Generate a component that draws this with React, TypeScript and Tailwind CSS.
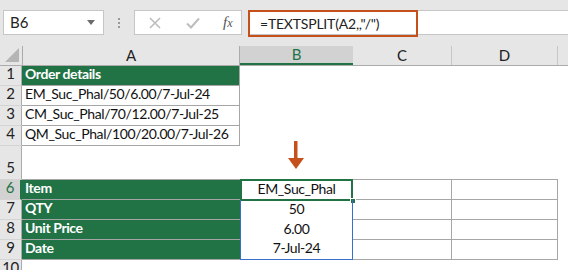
import React from "react";

const font = { fontFamily: "Lato, 'Liberation Sans', sans-serif" };

const gridLine = "border-[#a6a6a6]";

function RowHead({ n, active }: { n: number; active?: boolean }) {
  return (
    <div
      className={`w-[22px] shrink-0 flex items-end justify-center pb-[1px] text-[15px] border-b border-[#d4d4d4] ${
        active
          ? "bg-[#d2d2d2] text-[#217346] border-r-2 border-r-[#217346]"
          : "bg-[#e6e6e6] text-[#222] border-r border-r-[#ababab]"
      }`}
    >
      {n}
    </div>
  );
}

export default function App() {
  return (
    <div className="w-[568px] h-[270px] overflow-hidden bg-white" style={font}>
      {/* formula bar */}
      <div className="h-[46px] bg-[#e6e6e6] flex items-start pt-[10px] pl-[3px]">
        <div className="w-[101px] h-[25px] bg-white border border-[#c6c6c6] flex items-center px-[6px] text-[15px] text-[#222]">
          <span>B6</span>
          <span className="ml-auto mr-[2px] w-0 h-0 border-l-[4px] border-r-[4px] border-t-[5px] border-l-transparent border-r-transparent border-t-[#6b6b6b]" />
        </div>
        <div className="w-[30px] h-[25px] flex flex-col items-center justify-center gap-[2px]">
          <span className="w-[2px] h-[2px] bg-[#9a9a9a]" />
          <span className="w-[2px] h-[2px] bg-[#9a9a9a]" />
          <span className="w-[2px] h-[2px] bg-[#9a9a9a]" />
        </div>
        <div className="w-[108px] h-[25px] bg-white border border-[#c6c6c6] flex items-center">
          <svg width="12" height="12" viewBox="0 0 12 12" className="ml-[14px]">
            <path d="M1 1L11 11M11 1L1 11" stroke="#bdbdbd" strokeWidth="1.6" />
          </svg>
          <svg width="14" height="12" viewBox="0 0 14 12" className="ml-[25px]">
            <path d="M1 6.5L5 10.5L13 1.5" stroke="#bdbdbd" strokeWidth="2" fill="none" />
          </svg>
          <span
            className="ml-[23px] text-[15px] italic text-[#555]"
            style={{ fontFamily: "'Liberation Serif', serif" }}
          >
            f<span className="text-[12px]">x</span>
          </span>
        </div>
        <div className="ml-[6px] flex-1 h-[25px] bg-white border-y border-[#c6c6c6] flex">
          <div className="w-[170px] h-[27px] -mt-[1px] border-2 border-[#c5501b] flex items-center pl-[10px] text-[14px] tracking-[-0.2px] text-[#222] whitespace-nowrap">
            =TEXTSPLIT(A2,,"/")
          </div>
        </div>
      </div>

      {/* column headers */}
      <div className="flex h-[20px] bg-[#e6e6e6] border-b border-[#ababab] text-[15px] text-[#222]">
        <div className="w-[22px] shrink-0 relative">
          <svg width="14" height="14" viewBox="0 0 14 14" className="absolute right-[3px] bottom-[3px]">
            <path d="M14 0V14H0Z" fill="#b5b5b5" />
          </svg>
        </div>
        <div className="w-[218px] shrink-0 flex items-center justify-center border-l border-r border-[#ababab]">A</div>
        <div className="w-[113px] shrink-0 flex items-center justify-center bg-[#d2d2d2] text-[#217346] border-b-2 border-[#217346]">B</div>
        <div className="w-[99px] shrink-0 flex items-center justify-center border-r border-[#c6c6c6]">C</div>
        <div className="w-[106px] shrink-0 flex items-center justify-center border-r border-[#c6c6c6]">D</div>
        <div className="flex-1" />
      </div>

      {/* sheet */}
      <div className="text-[14px] tracking-[-0.4px] text-[#111] whitespace-nowrap">
        <div className="flex h-[20px]">
          <RowHead n={1} />
          <div className={`w-[218px] shrink-0 bg-[#217346] text-white font-bold flex items-end pb-[1px] pl-[3px] border-r border-b ${gridLine}`}>
            Order details
          </div>
        </div>
        {[
          [2, "EM_Suc_Phal/50/6.00/7-Jul-24"],
          [3, "CM_Suc_Phal/70/12.00/7-Jul-25"],
          [4, "QM_Suc_Phal/100/20.00/7-Jul-26"],
        ].map(([n, t]) => (
          <div key={n} className="flex h-[20px]">
            <RowHead n={n as number} />
            <div className={`w-[218px] shrink-0 flex items-end pb-[1px] pl-[3px] border-r border-b ${gridLine}`}>
              {t}
            </div>
          </div>
        ))}

        {/* row 5 with arrow */}
        <div className="flex h-[34px]">
          <RowHead n={5} />
          <div className={`w-[218px] shrink-0 border-b ${gridLine}`} />
          <div className={`w-[113px] shrink-0 border-b ${gridLine} flex justify-center`}>
            <svg width="16" height="29" viewBox="0 0 16 29" className="mt-[-5px] -ml-[2px]">
              <rect x="6" y="0" width="3.5" height="18" fill="#c5501b" />
              <path d="M0 17H16L8 28Z" fill="#c5501b" />
            </svg>
          </div>
          <div className={`w-[99px] shrink-0 border-b ${gridLine}`} />
          <div className={`w-[106px] shrink-0 border-b ${gridLine}`} />
        </div>

        {[
          [6, "Item", "EM_Suc_Phal"],
          [7, "QTY", "50"],
          [8, "Unit Price", "6.00"],
          [9, "Date", "7-Jul-24"],
        ].map(([n, label, val]) => (
          <div key={n} className="flex h-[20px]">
            <RowHead n={n as number} active={n === 6} />
            <div className={`w-[218px] shrink-0 bg-[#217346] text-white font-bold flex items-end pb-[1px] pl-[3px] border-b ${gridLine}`}>
              {label}
            </div>
            <div
              className={`w-[113px] shrink-0 relative flex items-end justify-center pb-[1px] border-l border-r border-[#3a6fc9] ${
                n === 9 ? "border-b" : ""
              }`}
            >
              {val}
              {n === 6 && (
                <>
                  <span className="absolute -left-[1px] -top-[1px] -right-[1px] -bottom-[1px] border-2 border-[#217346]" />
                  <span className="absolute -right-[4px] -bottom-[4px] w-[6px] h-[6px] bg-[#217346] border border-white" />
                </>
              )}
            </div>
            <div className={`w-[99px] shrink-0 border-r border-b ${gridLine}`} />
            <div className={`w-[106px] shrink-0 border-r border-b ${gridLine}`} />
          </div>
        ))}
        <div className="flex h-[20px]">
          <RowHead n={10} />
        </div>
      </div>
    </div>
  );
}
